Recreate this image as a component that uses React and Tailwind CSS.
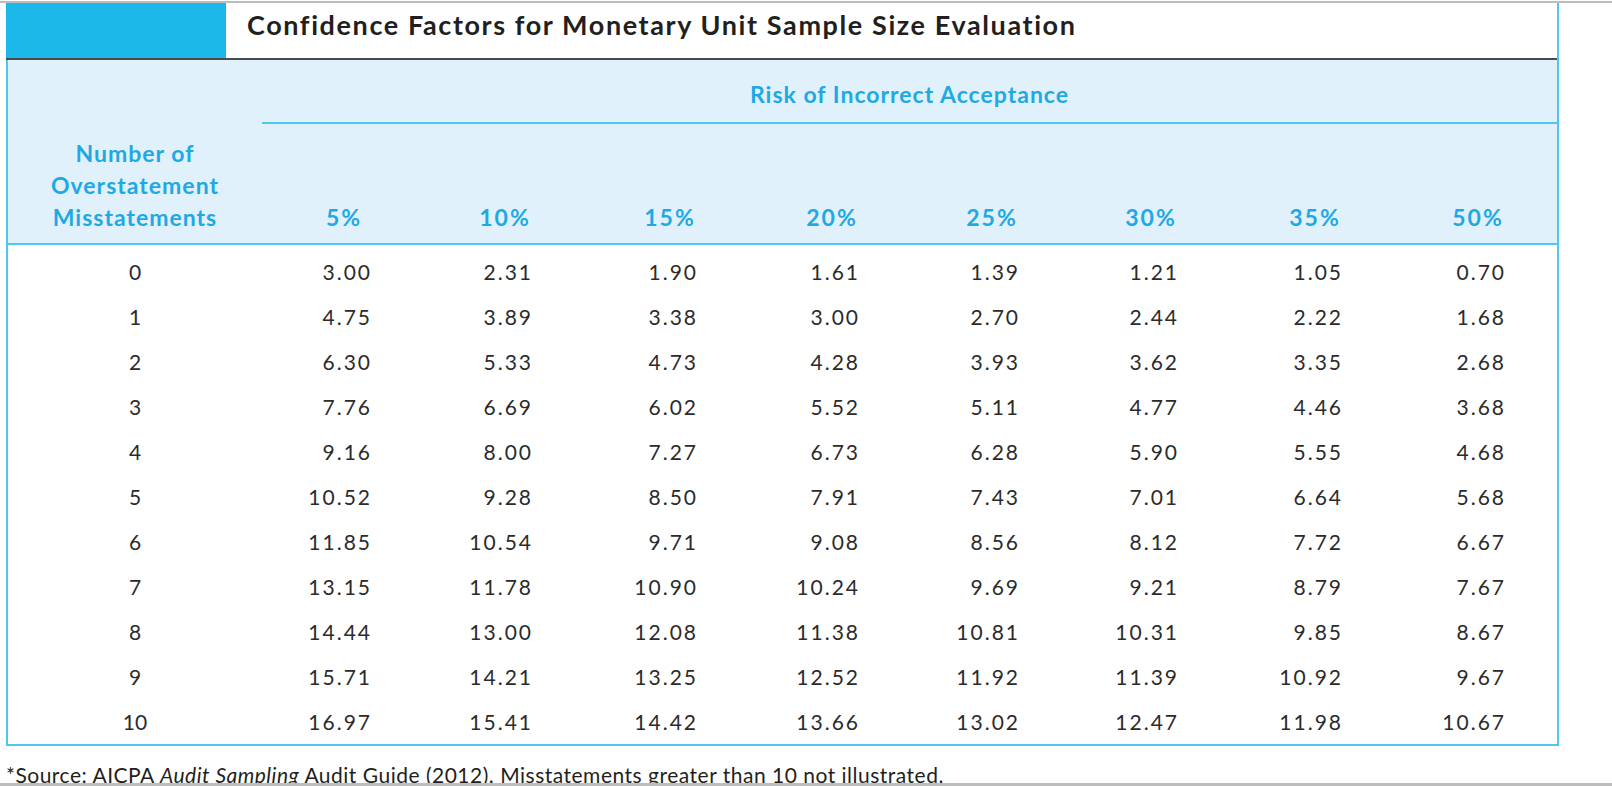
const PCTS = ["5%", "10%", "15%", "20%", "25%", "30%", "35%", "50%"];

const ROWS = [
  ["3.00", "2.31", "1.90", "1.61", "1.39", "1.21", "1.05", "0.70"],
  ["4.75", "3.89", "3.38", "3.00", "2.70", "2.44", "2.22", "1.68"],
  ["6.30", "5.33", "4.73", "4.28", "3.93", "3.62", "3.35", "2.68"],
  ["7.76", "6.69", "6.02", "5.52", "5.11", "4.77", "4.46", "3.68"],
  ["9.16", "8.00", "7.27", "6.73", "6.28", "5.90", "5.55", "4.68"],
  ["10.52", "9.28", "8.50", "7.91", "7.43", "7.01", "6.64", "5.68"],
  ["11.85", "10.54", "9.71", "9.08", "8.56", "8.12", "7.72", "6.67"],
  ["13.15", "11.78", "10.90", "10.24", "9.69", "9.21", "8.79", "7.67"],
  ["14.44", "13.00", "12.08", "11.38", "10.81", "10.31", "9.85", "8.67"],
  ["15.71", "14.21", "13.25", "12.52", "11.92", "11.39", "10.92", "9.67"],
  ["16.97", "15.41", "14.42", "13.66", "13.02", "12.47", "11.98", "10.67"],
];

const GRID =
  "grid grid-cols-[254px_160px_161px_165px_162px_160px_159px_164px_163px]";

export default function App() {
  return (
    <div className="flex h-[786px] w-[1612px] flex-col overflow-hidden bg-white font-['Lato',sans-serif] text-[#2b2b2b]">
      <div className="mt-[1px] h-[2px] bg-[#bdbdbd]" />

      <div className="ml-[6px] w-[1553px] border-r-2 border-[#4fc8f0]">
        {/* title bar */}
        <div className="flex h-[55px]">
          <div className="w-[220px] bg-[#1db8ea]" />
          <h1 className="whitespace-nowrap pl-[21px] pt-[8px] text-[27px] font-bold leading-none tracking-[1.6px] text-[#231f20]">
            Confidence Factors for Monetary Unit Sample Size Evaluation
          </h1>
        </div>
        <div className="h-[2px] bg-[#4a4a4a]" />

        <div className="border-b-2 border-l-2 border-[#4fc8f0]">
          {/* header band */}
          <div className="bg-[#e1f1fb] text-[#1ea9e5]">
            <div className="flex h-[62px] items-center justify-center pl-[254px] pt-[6px] text-[23px] font-bold tracking-[1px]">
              Risk of Incorrect Acceptance
            </div>
            <div className="ml-[254px] h-[2px] bg-[#4fc8f0]" />
            <div className={`${GRID} h-[119px] items-end pb-[10px] text-[23px] font-bold leading-[32px]`}>
              <div className="text-center tracking-[1px]">
                Number of
                <br />
                Overstatement
                <br />
                Misstatements
              </div>
              {PCTS.map((p) => (
                <div key={p} className="flex justify-end pr-[52px]">
                  <div className="w-[52px] whitespace-nowrap text-center tracking-[2px]">{p}</div>
                </div>
              ))}
            </div>
            <div className="h-[2px] bg-[#4fc8f0]" />
          </div>

          {/* data rows */}
          <div className="pt-[4px] text-[21px]">
            {ROWS.map((row, i) => (
              <div key={i} className={`${GRID} h-[45px] items-center`}>
                <div className="text-center">{i}</div>
                {row.map((v, j) => (
                  <div key={j} className="pr-[50px] text-right tracking-[2px]">
                    {v}
                  </div>
                ))}
              </div>
            ))}
          </div>
        </div>
      </div>

      <div className="h-[37px] overflow-hidden whitespace-nowrap pl-[6px] pt-[17px] text-[21px] leading-[24px] tracking-[0.5px] text-[#231f20]">
        *Source: AICPA <i>Audit Sampling</i> Audit Guide (2012). Misstatements greater than 10 not illustrated.
      </div>
      <div className="h-[3px] bg-[#bdbdbd]" />
    </div>
  );
}
